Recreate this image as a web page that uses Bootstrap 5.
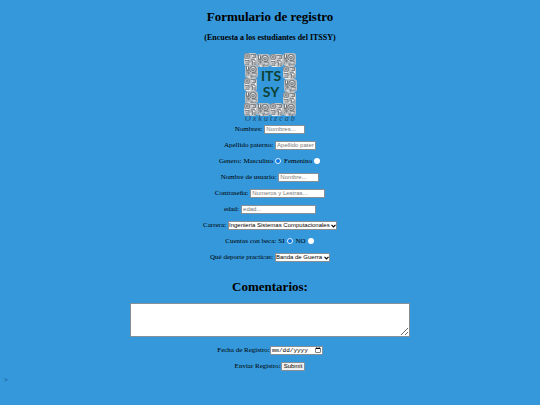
<!DOCTYPE html>
<html lang="es">
<head>
<meta charset="utf-8">
<meta name="viewport" content="width=device-width, initial-scale=1">
<title>Formulario de registro</title>
<link rel="stylesheet" href="https://cdn.jsdelivr.net/npm/bootstrap@5.3.0/dist/css/bootstrap.min.css">
<style>
body { background: #3498db; color: #000; font: 7px/10px "Liberation Serif", serif; }
.title { font-size: 13px; line-height: 17px; font-weight: 700; }
.subtitle { font-size: 8px; line-height: 10px; font-weight: 700; }
.fields { gap: 6px; }
.line { height: 10px; gap: 2px; }
.line.tight { gap: 0; }
.entry, .pick, .send { font: 6px/7px "Liberation Sans", sans-serif; color: #000; border: 1px solid #858f97; border-radius: 0; height: 9px; padding: 0 1px; background: #fff; }
.entry { width: 41px; }
.entry.wide { width: 75px; }
.entry::placeholder { color: #777; opacity: 1; }
.chooser { position: relative; display: inline-flex; }
.pick { appearance: none; padding: 0 6px 0 0; }
.chooser svg { position: absolute; right: 1px; top: 3px; pointer-events: none; }
.dot { width: 6px; height: 6px; margin: 0 1px 0 0; appearance: none; background: #fff; border-radius: 50%; }
.dot:checked { background: #0b75e8; border: 1px solid #e4f0fc; }
.comments { width: 52.5%; height: 34px; border: 1px solid #858f97; border-radius: 0; background: #fff; font: 6px/7px "Liberation Mono", monospace; }
.entry.date { font-family: "Liberation Mono", monospace; width: 53px; }
.date::-webkit-datetime-edit, .date::-webkit-datetime-edit-fields-wrapper { padding: 0; }
.date::-webkit-datetime-edit-month-field, .date::-webkit-datetime-edit-day-field, .date::-webkit-datetime-edit-year-field { padding: 0; }
.date::-webkit-calendar-picker-indicator { width: 6px; height: 6px; padding: 0; margin: 0; }
.send { background: #efefef; border-radius: 1px; padding: 0 2px; }
.stray { color: #174b72; }
</style>
<script src="https://cdn.jsdelivr.net/npm/bootstrap@5.3.0/dist/js/bootstrap.bundle.min.js"></script>
</head>
<body>
<main class="container-fluid px-1">
<form class="d-flex flex-column align-items-center text-center">
  <h1 class="title mt-2 mb-2">Formulario de registro</h1>
  <h2 class="subtitle mb-2">(Encuesta a los estudiantes del ITSSY)</h2>
  <svg width="54" height="73" viewBox="0 -2 54 73" role="img" aria-label="ITSSY Oxkutzcab">
    <defs>
      <g id="glyphA">
        <rect x="0" y="0" width="13" height="13" rx="3" fill="#c3c5c6"/>
        <g fill="none" stroke="#60666a" stroke-width=".7">
          <rect x=".6" y=".6" width="5" height="5" rx="2"/><circle cx="3.2" cy="3" r="1"/>
          <path d="M6.500 1.500h5v3h-3M7 6.500c3-1 4 1 5 2M1 7.500h4v4h-3.500M6.500 8h2v4M9.500 10h3M3 9v1.500M9.500 2.800h1M10 11.800h2"/>
        </g>
        <path d="M7.500 2.800h1.500M1.500 6.500h3M9 8.500h1.500M5.500 10.500h1M2 12.300h5M11.500 5v2" stroke="#fff" stroke-width=".8"/>
      </g>
      <g id="glyphB">
        <rect x="0" y="0" width="13" height="13" rx="3" fill="#b9bcbe"/>
        <g fill="none" stroke="#5a6065" stroke-width=".7">
          <circle cx="8" cy="4.500" r="3.300"/><circle cx="8" cy="4.500" r="1.200"/>
          <path d="M1.500 1v4.500h2v-4M1 7h3v2h-2v2M5 9c2-2 5-1 7 0M5.500 11h6M3 3h1M6 12.200h1"/>
        </g>
        <path d="M2.500 2v2M5 8h2M8 10h2.500M2 10h1M7 2.700h2M3 12h2" stroke="#fff" stroke-width=".8"/>
      </g>
    </defs>
    <use href="#glyphA" x="1" y="0"/><use href="#glyphB" x="14" y="1"/><use href="#glyphA" x="27" y="1"/><use href="#glyphB" x="40" y="0"/>
    <use href="#glyphB" x="2" y="12"/><use href="#glyphA" x="1" y="25"/><use href="#glyphB" x="2" y="38"/>
    <use href="#glyphA" x="40" y="13"/><use href="#glyphB" x="41" y="26"/><use href="#glyphA" x="40" y="39"/>
    <use href="#glyphA" x="1" y="50"/><use href="#glyphB" x="14" y="50"/><use href="#glyphA" x="27" y="50"/><use href="#glyphB" x="40" y="50"/>
    <g font-family="Lato, sans-serif" font-weight="700" font-size="14" text-anchor="middle" fill="#0e4234">
      <text x="28" y="28">ITS</text><text x="28" y="44">SY</text>
    </g>
    <text x="2" y="68" font-family="Liberation Serif, serif" font-style="italic" font-size="8" letter-spacing="2" fill="#1d4568">Oxkutzcab</text>
  </svg>
  <div class="fields d-flex flex-column align-items-center w-100">
    <div class="line d-flex align-items-center"><label for="nombres">Nombres:</label><input class="entry" id="nombres" type="text" placeholder="Nombres..."></div>
    <div class="line d-flex align-items-center"><label for="apellido">Apellido paterno:</label><input class="entry" id="apellido" type="text" placeholder="Apellido paterno"></div>
    <div class="line d-flex align-items-center"><span>Genero:</span><label for="masc">Masculino</label><input class="dot" id="masc" type="radio" name="genero" checked><label for="fem">Femenino</label><input class="dot" id="fem" type="radio" name="genero"></div>
    <div class="line d-flex align-items-center"><label for="usuario">Nombre de usuario:</label><input class="entry" id="usuario" type="text" placeholder="Nombre..."></div>
    <div class="line d-flex align-items-center"><label for="clave">Contraseña:</label><input class="entry wide" id="clave" type="password" placeholder="Numeros y Lestras..."></div>
    <div class="line d-flex align-items-center"><label for="edad">edad:</label><input class="entry wide" id="edad" type="text" placeholder="edad..."></div>
    <div class="line d-flex align-items-center"><label for="carrera">Carrera:</label><span class="chooser"><select class="pick" id="carrera"><option>Ingenieria Sistemas Computacionales</option></select><svg width="5" height="4" viewBox="0 0 5 4"><path d="M.5.8 2.500 2.800 4.500.8" fill="none" stroke="#000" stroke-width="1.200"/></svg></span></div>
    <div class="line d-flex align-items-center"><span>Cuentas con beca:</span><label for="si">SI</label><input class="dot" id="si" type="radio" name="beca" checked><label for="no">NO</label><input class="dot" id="no" type="radio" name="beca"></div>
    <div class="line d-flex align-items-center"><label for="deporte">Qué deporte practicas:</label><span class="chooser"><select class="pick" id="deporte"><option>Banda de Guerra</option></select><svg width="5" height="4" viewBox="0 0 5 4"><path d="M.5.8 2.500 2.800 4.500.8" fill="none" stroke="#000" stroke-width="1.200"/></svg></span></div>
  </div>
  <h1 class="title mt-3 mb-2"><label for="comentarios">Comentarios:</label></h1>
  <textarea class="comments mb-2" id="comentarios"></textarea>
  <div class="fields d-flex flex-column align-items-center w-100">
    <div class="line tight d-flex align-items-center"><label for="fecha">Fecha de Registro:</label><input class="entry date" id="fecha" type="date"></div>
    <div class="line tight d-flex align-items-center"><label for="enviar">Enviar Registro:</label><button class="send" id="enviar" type="submit">Submit</button></div>
  </div>
</form>
<div class="stray mt-1">&gt;</div>
</main>
</body>
</html>
